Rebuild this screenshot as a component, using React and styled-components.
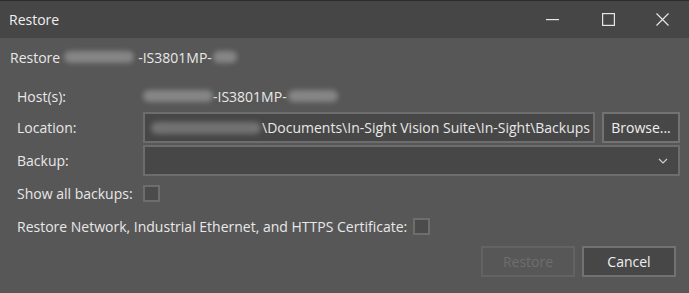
import React from 'react';
import styled, { createGlobalStyle } from 'styled-components';

const GlobalStyle = createGlobalStyle`
  html, body {
    margin: 0;
    padding: 0;
    background: #575757;
  }
  * {
    box-sizing: border-box;
  }
`;

const Window = styled.div`
  width: 689px;
  height: 293px;
  display: flex;
  flex-direction: column;
  background: #575757;
  color: #e8e8e8;
  font-family: 'Open Sans', 'Noto Sans', sans-serif;
  font-size: 14px;
  overflow: hidden;
`;

const TitleBar = styled.div`
  height: 38px;
  flex-shrink: 0;
  display: flex;
  align-items: center;
  background: #464646;
  border-top: 1px solid #2c2c2c;
  padding-left: 9px;
`;

const Title = styled.div`
  flex: 1;
  color: #f0f0f0;
`;

const Controls = styled.div`
  display: flex;
  height: 100%;
`;

const ControlButton = styled.div`
  width: ${(p) => p.$width || 56}px;
  height: 100%;
  display: flex;
  align-items: center;
  justify-content: center;
`;

const Content = styled.div`
  flex: 1;
  display: flex;
  flex-direction: column;
  padding: 9px 13px 0 10px;
`;

const Heading = styled.div`
  height: 20px;
  display: flex;
  align-items: center;
  white-space: nowrap;
`;

const Blur = styled.span`
  display: inline-block;
  width: ${(p) => p.$width}px;
  height: 12px;
  border-radius: 6px;
  background: ${(p) => p.$color || '#858585'};
  filter: blur(2.5px);
  margin: 0 ${(p) => p.$gap || 0}px;
`;

const Form = styled.div`
  display: flex;
  flex-direction: column;
  margin-left: 7px;
  margin-right: -4px;
`;

const Row = styled.div`
  display: flex;
  align-items: center;
  height: ${(p) => p.$height}px;
  margin-top: ${(p) => p.$top}px;
  white-space: nowrap;
`;

const Label = styled.div`
  width: 126px;
  flex-shrink: 0;
`;

const Value = styled.div`
  display: flex;
  align-items: center;
`;

const TextBox = styled.div`
  flex: 1;
  height: 100%;
  min-width: 0;
  display: flex;
  align-items: center;
  justify-content: flex-end;
  overflow: hidden;
  background: #474747;
  border: 2px solid #6d6d6d;
  padding: 0 3px;
`;

const Button = styled.div`
  width: ${(p) => p.$width}px;
  height: 31px;
  flex-shrink: 0;
  display: flex;
  align-items: center;
  justify-content: center;
  margin-left: ${(p) => p.$left || 0}px;
  border: 2px solid ${(p) => (p.$disabled ? '#636363' : '#727272')};
  background: ${(p) => (p.$disabled ? '#575757' : '#474747')};
  color: ${(p) => (p.$disabled ? '#6e6e6e' : '#f0f0f0')};
`;

const Combo = styled(TextBox)`
  padding-right: 10px;
`;

const Checkbox = styled.div`
  width: 17px;
  height: 17px;
  flex-shrink: 0;
  background: #4b4b4b;
  border: 2px solid #6d6d6d;
  margin-left: ${(p) => p.$left || 0}px;
`;

const Footer = styled.div`
  display: flex;
  justify-content: flex-end;
  gap: 7px;
  margin-top: 10px;
`;

const Chevron = () => (
  <svg width="10" height="6" viewBox="0 0 10 6">
    <path d="M1 1 L5 5 L9 1" fill="none" stroke="#cfcfcf" strokeWidth="1.2" />
  </svg>
);

const App = () => {
  return (
    <Window>
      <GlobalStyle />
      <TitleBar>
        <Title>Restore</Title>
        <Controls>
          <ControlButton>
            <svg width="13" height="2" viewBox="0 0 13 2">
              <rect x="0" y="0" width="13" height="1.2" fill="#e6e6e6" />
            </svg>
          </ControlButton>
          <ControlButton>
            <svg width="13" height="13" viewBox="0 0 13 13">
              <rect x="0.6" y="0.6" width="11.8" height="11.8" fill="none" stroke="#e6e6e6" strokeWidth="1.2" />
            </svg>
          </ControlButton>
          <ControlButton $width={53}>
            <svg width="13" height="13" viewBox="0 0 13 13">
              <path d="M0.5 0.5 L12.5 12.5 M12.5 0.5 L0.5 12.5" stroke="#e6e6e6" strokeWidth="1.2" />
            </svg>
          </ControlButton>
        </Controls>
      </TitleBar>
      <Content>
        <Heading>
          Restore<Blur $width={70} $gap={4} />-IS3801MP-<Blur $width={24} $gap={1} />
        </Heading>
        <Form>
          <Row $height={20} $top={19}>
            <Label>Host(s):</Label>
            <Value>
              <Blur $width={70} />-IS3801MP-<Blur $width={50} $gap={1} />
            </Value>
          </Row>
          <Row $height={31} $top={6}>
            <Label>Location:</Label>
            <TextBox>
              <Blur $width={110} $color="#727272" $gap={1} />\Documents\In-Sight Vision Suite\In-Sight\Backups
            </TextBox>
            <Button $width={78} $left={7}>Browse...</Button>
          </Row>
          <Row $height={31} $top={2}>
            <Label>Backup:</Label>
            <Combo>
              <Chevron />
            </Combo>
          </Row>
          <Row $height={20} $top={7}>
            <Label>Show all backups:</Label>
            <Checkbox />
          </Row>
          <Row $height={20} $top={13}>
            Restore Network, Industrial Ethernet, and HTTPS Certificate:
            <Checkbox $left={6} />
          </Row>
        </Form>
        <Footer>
          <Button $width={94} $disabled>Restore</Button>
          <Button $width={94}>Cancel</Button>
        </Footer>
      </Content>
    </Window>
  );
};

export default App;
